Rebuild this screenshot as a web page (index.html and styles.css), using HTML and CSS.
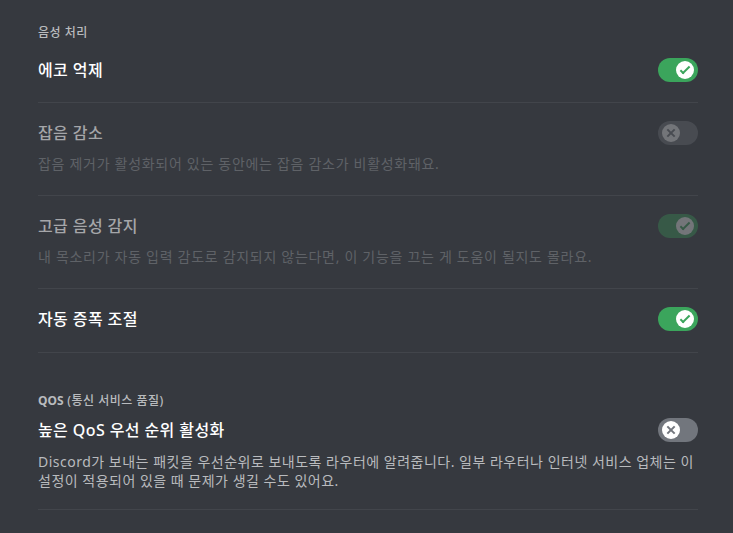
FILE: index.html
```html
<!DOCTYPE html>
<html lang="ko">
<head>
<meta charset="utf-8">
<link rel="stylesheet" href="styles.css">
</head>
<body>
<main class="page">
  <section class="section">
    <h5 class="section-title">음성 처리</h5>

    <div class="item">
      <div class="row">
        <span class="title">에코 억제</span>
        <span class="toggle on">
          <span class="knob"><svg viewBox="0 0 20 20"><path d="M7.9 14.85L6.3 13.26L14.31 5.26L15.9 6.85L7.9 14.85Z"/><path d="M4.09 11.09L5.68 9.5L9.45 13.27L7.86 14.86L4.09 11.09Z"/></svg></span>
        </span>
      </div>
    </div>
    <div class="divider"></div>

    <div class="item disabled">
      <div class="row">
        <span class="title">잡음 감소</span>
        <span class="toggle off">
          <span class="knob"><svg viewBox="0 0 20 20"><path d="M5.13 6.73L6.72 5.14L14.86 13.27L13.26 14.86L5.13 6.73Z"/><path d="M13.27 5.14L14.86 6.73L6.73 14.86L5.14 13.27L13.27 5.14Z"/></svg></span>
        </span>
      </div>
      <p class="desc">잡음 제거가 활성화되어 있는 동안에는 잡음 감소가 비활성화돼요.</p>
    </div>
    <div class="divider"></div>

    <div class="item disabled">
      <div class="row">
        <span class="title">고급 음성 감지</span>
        <span class="toggle on">
          <span class="knob"><svg viewBox="0 0 20 20"><path d="M7.9 14.85L6.3 13.26L14.31 5.26L15.9 6.85L7.9 14.85Z"/><path d="M4.09 11.09L5.68 9.5L9.45 13.27L7.86 14.86L4.09 11.09Z"/></svg></span>
        </span>
      </div>
      <p class="desc">내 목소리가 자동 입력 감도로 감지되지 않는다면, 이 기능을 끄는 게 도움이 될지도 몰라요.</p>
    </div>
    <div class="divider"></div>

    <div class="item last">
      <div class="row">
        <span class="title">자동 증폭 조절</span>
        <span class="toggle on">
          <span class="knob"><svg viewBox="0 0 20 20"><path d="M7.9 14.85L6.3 13.26L14.31 5.26L15.9 6.85L7.9 14.85Z"/><path d="M4.09 11.09L5.68 9.5L9.45 13.27L7.86 14.86L4.09 11.09Z"/></svg></span>
        </span>
      </div>
    </div>
    <div class="divider"></div>
  </section>

  <section class="section qos">
    <h5 class="section-title"><b>QOS</b> (통신 서비스 품질)</h5>
    <div class="item">
      <div class="row">
        <span class="title">높은 QoS 우선 순위 활성화</span>
        <span class="toggle off">
          <span class="knob"><svg viewBox="0 0 20 20"><path d="M5.13 6.73L6.72 5.14L14.86 13.27L13.26 14.86L5.13 6.73Z"/><path d="M13.27 5.14L14.86 6.73L6.73 14.86L5.14 13.27L13.27 5.14Z"/></svg></span>
        </span>
      </div>
      <p class="desc qos-desc">Discord가 보내는 패킷을 우선순위로 보내도록 라우터에 알려줍니다. 일부 라우터나 인터넷 서비스 업체는 이 설정이 적용되어 있을 때 문제가 생길 수도 있어요.</p>
    </div>
    <div class="divider"></div>
  </section>
</main>
</body>
</html>
```

FILE: styles.css
```css
html, body {
  margin: 0;
  padding: 0;
  background: #36393f;
  height: 100%;
}
body {
  font-family: "Noto Sans", "Noto Sans CJK KR", sans-serif;
  color: #dcddde;
  overflow: hidden;
}
.page {
  width: 660px;
  padding: 25px 0 0 38px;
}
.section-title {
  margin: 0 0 17px;
  font-size: 12px;
  line-height: 16px;
  font-weight: 500;
  letter-spacing: 0.5px;
  color: #b9bbbe;
}
.section-title b {
  font-weight: 700;
  letter-spacing: 0;
}
.qos {
  padding-top: 22px;
}
.qos .section-title {
  margin-bottom: 9px;
}
.item {
  padding-bottom: 20px;
}
.item.last {
  padding-bottom: 21px;
}
.divider {
  height: 1px;
  background: #42454b;
  margin-bottom: 18px;
}
.row {
  display: flex;
  align-items: center;
  justify-content: space-between;
  height: 24px;
}
.title {
  font-size: 16px;
  line-height: 24px;
  font-weight: 500;
  letter-spacing: 0.4px;
  color: #ffffff;
}
.desc {
  margin: 8px 0 0;
  font-size: 14px;
  line-height: 20px;
  letter-spacing: 0.7px;
  color: #b9bbbe;
}
.item.disabled .desc {
  margin-top: 9px;
  color: #5f6267;
}
.item.disabled {
  padding-bottom: 21px;
}
.item.disabled .title {
  color: #a5a6a9;
}
.qos-desc {
  margin-top: 10px;
  line-height: 19px;
  letter-spacing: 0.5px;
}
.qos .item {
  padding-bottom: 19px;
}
.toggle {
  position: relative;
  flex: none;
  width: 40px;
  height: 24px;
  border-radius: 12px;
}
.toggle.on { background: #3ba55c; }
.toggle.off { background: #72767d; }
.disabled .toggle { opacity: 0.3; }
.knob {
  position: absolute;
  top: 3px;
  width: 18px;
  height: 18px;
  border-radius: 50%;
  background: #ffffff;
  display: flex;
  align-items: center;
  justify-content: center;
}
.toggle.on .knob { left: 18px; }
.toggle.off .knob { left: 4px; }
.knob svg {
  width: 18px;
  height: 18px;
}
.toggle.on .knob svg { fill: #3ba55c; }
.toggle.off .knob svg { fill: #72767d; }
```
